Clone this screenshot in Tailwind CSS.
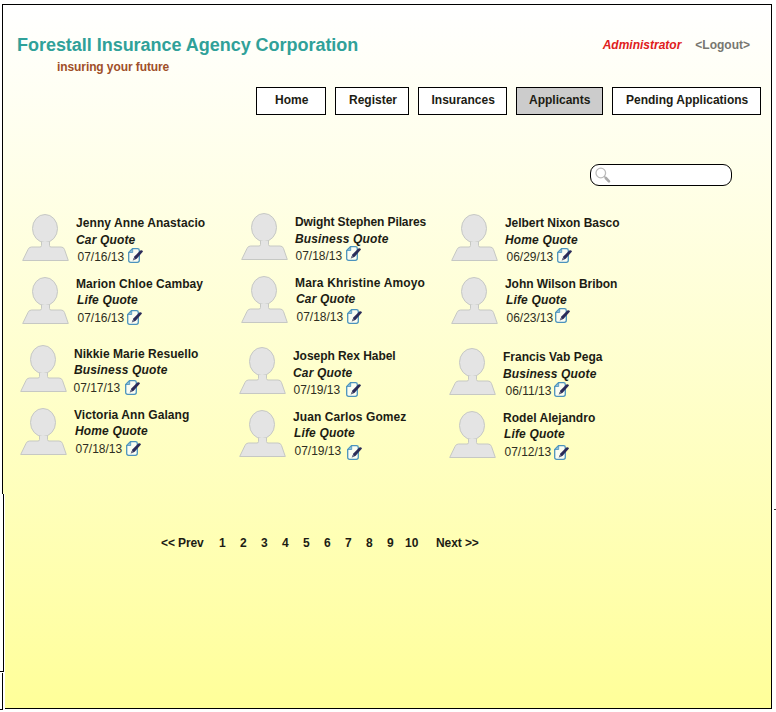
<!DOCTYPE html>
<html lang="en">
<head>
<meta charset="utf-8">
<title>Forestall Insurance Agency Corporation</title>
<script src="https://cdn.jsdelivr.net/npm/@tailwindcss/browser@4"></script>
</head>
<body class="bg-white">
<svg class="hidden">
  <symbol id="avatar" viewBox="0 0 48 48">
    <g fill="#e4e4e4" stroke="#c6c8c4" stroke-width="1">
      <path d="M19.500 27v4.500q0 1.500-1.500 1.500H9.500q-2.500 0-3.500 2.500L0.700 46.500H46.300L42.500 35.500q-.8-2.500-3.500-2.500H29q-1.500 0-1.500-1.500V27z"/>
      <ellipse cx="23" cy="14.500" rx="12.500" ry="14"/>
    </g>
    <path d="M20 27.800h7v4h-7z" fill="#e4e4e4"/>
  </symbol>
  <symbol id="edit" viewBox="0 0 15 15">
    <path d="M4.500.7H9.500Q11.300.7 11.300 2.500V12.300Q11.300 14.300 9.300 14.300H2.700Q.7 14.300.7 12.300V4.500z" fill="#fbfdf2" stroke="#4b93bd" stroke-width="1.300"/>
    <path d="M4.700.8V4.500H.8z" fill="#8fc0dc" stroke="#4b93bd" stroke-width=".8"/>
    <path d="M4.700 12.500L6.600 8.300 12.300 2.400Q14.200 1.600 15 3.500L8.700 10.800z" fill="#2b2b58"/>
    <path d="M4.700 12.500L6.100 9.400 7.700 11.200z" fill="#77798e"/>
  </symbol>
</svg>

<div class="relative w-[776px] h-[712px] overflow-hidden font-['Liberation_Sans',Arial,sans-serif] text-[12px] leading-[14px] text-[#1c1c14]">
  <div class="ml-[2px] w-[770px] h-[709px] pt-[4px]">
    <main class="h-[705px] border border-black bg-linear-to-b from-white to-[#ffff99]">
      <header class="flex justify-between h-[82px] pt-[29px] pl-[14px] pr-[21px]">
        <div class="font-bold">
          <h1 class="text-[18px] leading-[22px] tracking-[-0.03px] text-[#30a199]">Forestall Insurance Agency Corporation</h1>
          <p class="mt-[4px] pl-[40px] tracking-[-0.09px] text-[#9f4f28]">insuring your future</p>
        </div>
        <div class="flex gap-[14px] pt-[4px] font-bold">
          <span class="italic text-[#e0201c]">Administrator</span>
          <a class="text-[#777770]">&lt;Logout&gt;</a>
        </div>
      </header>
      <nav class="flex justify-end gap-[9px] pr-[10px] font-bold">
        <a class="w-[70px] h-[28px] border border-black bg-white pt-[5px] pl-[18px]">Home</a>
        <a class="w-[74px] h-[28px] border border-black bg-white pt-[5px] pl-[13px]">Register</a>
        <a class="w-[89px] h-[28px] border border-black bg-white pt-[5px] pl-[12.500px]">Insurances</a>
        <a class="w-[87px] h-[28px] border border-black bg-[#cccccc] pt-[5px] pl-[12px]">Applicants</a>
        <a class="w-[149px] h-[28px] border border-black bg-white pt-[5px] pl-[13px] whitespace-nowrap">Pending Applications</a>
      </nav>
      <div class="mt-[49px] ml-[587px] w-[142px] h-[22px] rounded-[9px] border border-black bg-white pl-[4px] pt-[2px]">
        <svg class="w-[17px] h-[17px]" viewBox="0 0 17 17" fill="none"><circle cx="5.800" cy="6" r="4.800" stroke="#bcbcbc" stroke-width="1.300"/><path d="M9.200 9.400l2 2" stroke="#aaa" stroke-width="1.300"/><path d="M10.800 11l3.200 3.400" stroke="#aaa" stroke-width="2.600" stroke-linecap="round"/></svg>
      </div>
      <section id="applicants" class="flex h-[288px] pt-[27px]"></section>
      <div class="flex pt-[62px] pl-[158px] font-bold">
        <a class="w-[58px] tracking-[-0.1px]">&lt;&lt; Prev</a>
        <a class="w-[21px]">1</a><a class="w-[21px]">2</a><a class="w-[21px]">3</a><a class="w-[21px]">4</a><a class="w-[21px]">5</a><a class="w-[21px]">6</a><a class="w-[21px]">7</a><a class="w-[21px]">8</a><a class="w-[18px]">9</a><a class="w-[31px]">10</a>
        <a class="tracking-[-0.08px]">Next &gt;&gt;</a>
      </div>
    </main>
  </div>
  <!-- stepped lower-left edge -->
  <div class="absolute left-0 top-[494px] w-[5px] h-[218px] bg-white">
    <div class="w-[4px] h-[178px] border-r border-b border-black"></div>
    <div class="mt-[1px] w-[3px] h-[37px] border-r border-b border-black"></div>
  </div>
  <div class="absolute left-[774px] top-[509px] w-[2px] h-px bg-[#333]"></div>
</div>

<script>
// Columns of applicants: [card classes, name, quote classes, quote, date row classes, date, icon classes]
const columns = [
  ["w-[219px] pt-px pl-[19px]", [
    ["h-[63px] pt-[2px] tracking-[0.07px]", "Jenny Anne Anastacio", "mt-[3px]", "Car Quote", "mt-[3px] ml-[2px]", "07/16/13", "-mt-[2px] ml-[3px]"],
    ["h-[68px] tracking-[0.05px]", "Marion Chloe Cambay", "mt-[2px] ml-px", "Life Quote", "mt-[4px] ml-[2px]", "07/16/13", "-mt-px ml-[2px]"],
    ["h-[63px] pt-[2px] -ml-[2px] tracking-[0.05px]", "Nikkie Marie Resuello", "mt-[2px]", "Business Quote", "mt-[4px]", "07/17/13", "-mt-px ml-[4px]"],
    ["h-[50px] -ml-[2px] tracking-[0.07px]", "Victoria Ann Galang", "mt-[2px] ml-px", "Home Quote", "mt-[4px] ml-[2px]", "07/18/13", "-mt-px ml-[3px]"]]],
  ["w-[210px] pl-[19px]", [
    ["h-[63px] pt-[2px] tracking-[-0.1px]", "Dwight Stephen Pilares", "mt-[3px]", "Business Quote", "mt-[3px] ml-px", "07/18/13", "-mt-[3px] ml-[3px]"],
    ["h-[71px] tracking-[0.16px]", "Mara Khristine Amoyo", "mt-[2px] ml-px", "Car Quote", "mt-[4px] ml-[2px]", "07/18/13", "-mt-px ml-[3px]"],
    ["h-[63px] pt-[2px] -ml-[2px] tracking-[-0.05px]", "Joseph Rex Habel", "mt-[3px]", "Car Quote", "mt-[3px] ml-px", "07/19/13", "-mt-px ml-[5px]"],
    ["h-[50px] -ml-[2px] tracking-[0.08px]", "Juan Carlos Gomez", "mt-[2px] ml-px", "Life Quote", "mt-[4px] ml-[2px]", "07/19/13", "mt-px ml-[5px]"]]],
  ["w-[210px] pt-px pl-[19px]", [
    ["h-[63px] pt-[2px] tracking-[-0.05px]", "Jelbert Nixon Basco", "mt-[3px]", "Home Quote", "mt-[3px] ml-[2px]", "06/29/13", "-mt-[2px] ml-[3px]"],
    ["h-[71px] tracking-[-0.05px]", "John Wilson Bribon", "mt-[2px] ml-px", "Life Quote", "mt-[4px] ml-[2px]", "06/23/13", "-mt-[3px] ml-px"],
    ["h-[63px] pt-[2px] -ml-[2px]", "Francis Vab Pega", "mt-[3px]", "Business Quote", "mt-[3px] ml-[3px]", "06/11/13", "-mt-[2px] ml-px"],
    ["h-[50px] -ml-[2px] tracking-[0.05px]", "Rodel Alejandro", "mt-[2px] ml-px", "Life Quote", "mt-[4px] ml-[2px]", "07/12/13", "ml-[2px]"]]],
];
document.getElementById("applicants").innerHTML = columns.map(([col, cards]) =>
  `<div class="${col}">` + cards.map(([card, name, qc, quote, dc, date, ic]) => `
    <article class="flex whitespace-nowrap ${card}">
      <svg class="${card.includes("pt-[2px]") ? "-mt-[2px]" : ""} w-[48px] h-[48px] shrink-0"><use href="#avatar"/></svg>
      <div class="ml-[6px]">
        <h2 class="font-bold">${name}</h2>
        <p class="font-bold italic tracking-[0.15px] ${qc}">${quote}</p>
        <div class="flex h-[14px] items-start tracking-normal text-[#2e2e22] ${dc}"><span class="w-[47px] -ml-[0.5px] mr-[0.5px]">${date}</span><svg class="w-[15px] h-[15px] shrink-0 ${ic}"><use href="#edit"/></svg></div>
      </div>
    </article>`).join("") + `</div>`).join("");
</script>
</body>
</html>
